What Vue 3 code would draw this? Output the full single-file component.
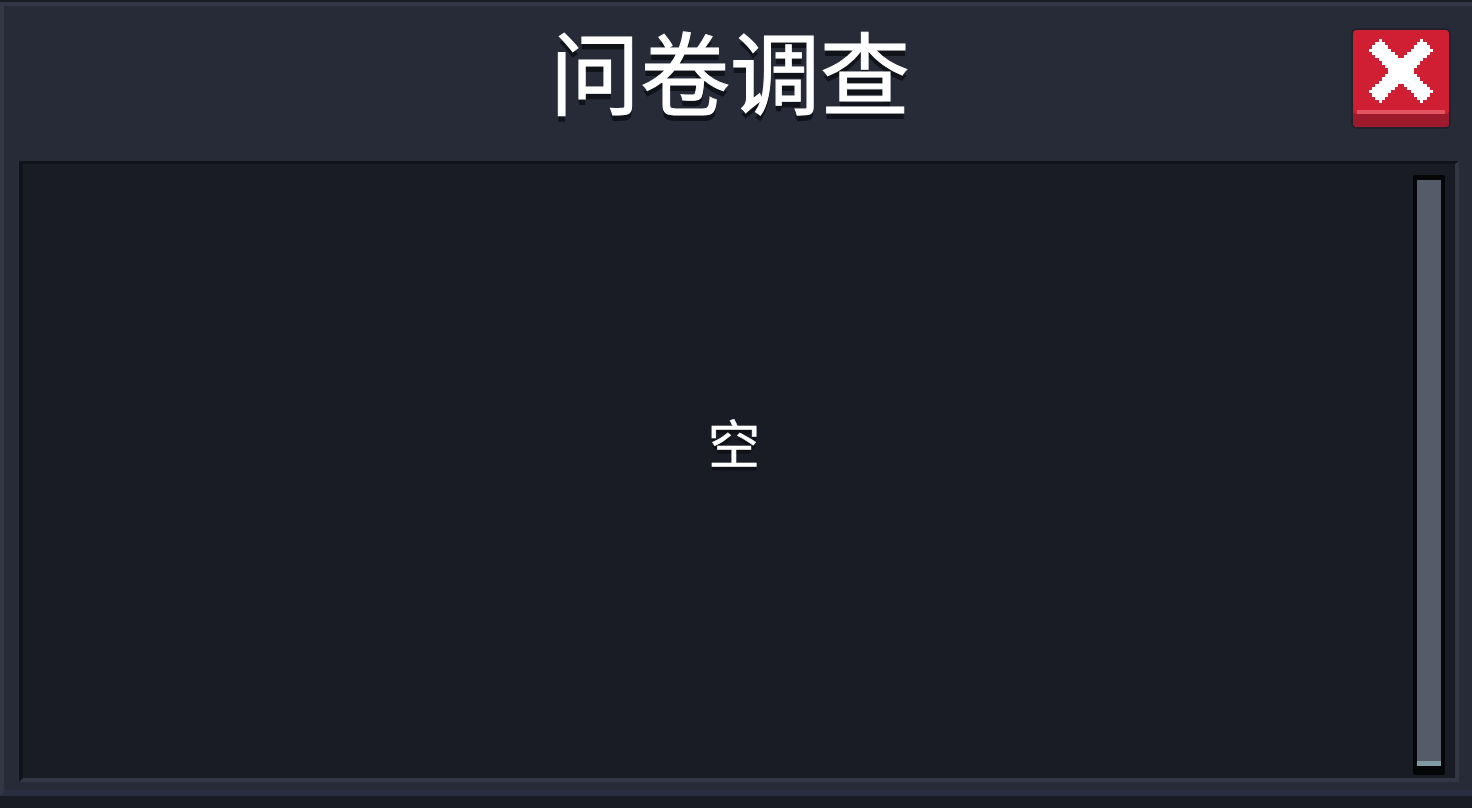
<template>
  <div class="window">
    <div class="title-bar">
      <div class="title">问卷调查</div>
      <button class="close-btn">
        <svg class="close-icon" viewBox="0 0 20 20" shape-rendering="crispEdges">
          <rect
            v-for="cell in xCells"
            :key="cell.x + '-' + cell.y"
            :x="cell.x"
            :y="cell.y"
            width="1"
            height="1"
            fill="#ffffff"
          />
        </svg>
        <span class="close-highlight"></span>
      </button>
    </div>

    <div class="panel">
      <div class="content">
        <span class="empty-text">空</span>
        <div class="scroll-track">
          <div class="scroll-thumb"></div>
        </div>
      </div>
    </div>
  </div>
</template>

<script setup>
// pixel-art cross, two diagonal arms with chamfered tips
const xCells = []
for (let y = 0; y < 20; y++) {
  for (let x = 0; x < 20; x++) {
    const sum = x + y
    const diff = x - y
    const armA = Math.abs(diff) <= 3 && sum >= 3 && sum <= 35
    const armB = Math.abs(sum - 19) <= 3 && diff >= -16 && diff <= 16
    if (armA || armB) xCells.push({ x, y })
  }
}
</script>

<style>
html,
body {
  margin: 0;
  background: #1a1c25;
}
</style>

<style scoped>
.window {
  box-sizing: border-box;
  width: 1472px;
  height: 808px;
  padding: 2px 0 12px 0;
  background: #1a1c25;
  display: flex;
  flex-direction: column;
}

.title-bar {
  height: 159px;
  flex-shrink: 0;
  box-sizing: border-box;
  padding: 0 16px 0 0;
  background: #272b38;
  border-top: 4px solid #333745;
  border-left: 4px solid #333745;
  position: relative;
  display: flex;
  align-items: center;
  justify-content: center;
}

.title {
  font-family: "Noto Sans CJK SC", "Liberation Sans", sans-serif;
  font-size: 90px;
  line-height: 1;
  color: #ffffff;
  -webkit-text-stroke: 1px #ffffff;
  text-shadow: 0 6px 0 #11131a;
  margin-top: -30px;
}

.close-btn {
  position: absolute;
  top: 24px;
  right: 23px;
  width: 96px;
  height: 97px;
  padding: 0 0 16px 0;
  border: none;
  border-radius: 4px;
  background: #d01f32;
  box-shadow: inset 0 -13px 0 #9c1a2c, 0 0 0 2px #1f222c;
  display: flex;
  align-items: center;
  justify-content: center;
}

.close-icon {
  width: 64px;
  height: 64px;
}

.close-highlight {
  position: absolute;
  left: 4px;
  right: 4px;
  bottom: 13px;
  height: 4px;
  background: #e2545f;
}

.panel {
  flex: 1;
  display: flex;
  box-sizing: border-box;
  padding: 0 13px 8px 15px;
  background: #272b38;
  border-left: 4px solid #333745;
  border-bottom: 6px solid #2b2e40;
}

.content {
  flex: 1;
  position: relative;
  box-sizing: border-box;
  padding: 0 10px 58px 0;
  background: #1a1c25;
  display: flex;
  align-items: center;
  justify-content: center;
  border-top: 3px solid #11131b;
  border-left: 4px solid #11131b;
  border-right: 4px solid #333745;
  border-bottom: 4px solid #333745;
}

.empty-text {
  font-family: "Noto Sans CJK SC", "Liberation Sans", sans-serif;
  font-size: 52px;
  line-height: 1;
  color: #ffffff;
  -webkit-text-stroke: 0.5px #ffffff;
  text-shadow: 0 4px 0 #0e1016;
}

.scroll-track {
  position: absolute;
  top: 11px;
  right: 10px;
  bottom: 3px;
  width: 32px;
  box-sizing: border-box;
  padding: 5px 4px 9px 4px;
  background: #050608;
  border-radius: 2px;
  display: flex;
}

.scroll-thumb {
  flex: 1;
  background: #555b68;
  box-shadow: inset 0 -5px 0 #7f9aa3;
}
</style>
